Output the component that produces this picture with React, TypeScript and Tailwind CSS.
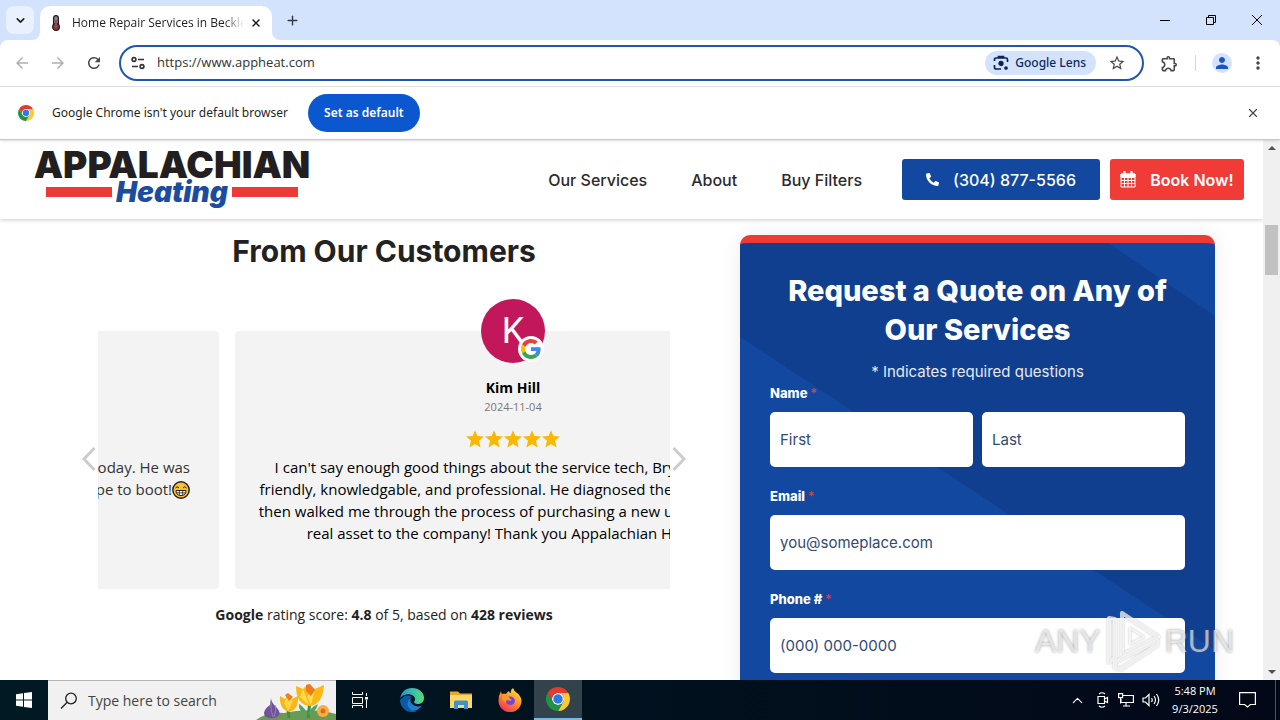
import { useState } from "react";
import type { ReactNode } from "react";
import { ChevronDown, ChevronUp, Plus, Search, X } from "lucide-react";
import { MdArrowBack, MdArrowForward, MdMoreVert, MdOutlineExtension, MdPerson, MdRefresh, MdStarBorder } from "react-icons/md";
import { FaPhoneAlt } from "react-icons/fa";

const uiFont = "font-['Open_Sans',sans-serif]";
const chromeFont = "font-['Noto_Sans',sans-serif]";
const siteFont = "font-['Inter',sans-serif]";

const reviewLines = [
  "I can't say enough good things about the service tech, Bryan. He was",
  "friendly, knowledgable, and professional. He diagnosed the problem and",
  "then walked me through the process of purchasing a new unit. Bryan is a",
  "real asset to the company! Thank you Appalachian Heating!",
];

function ChromeLogo({ className }: { className: string }) {
  return (
    <svg viewBox="0 0 48 48" className={className} aria-hidden="true">
      <circle cx="24" cy="24" r="12" fill="#fff" />
      <path d="M24 12H44.78a24 24 0 0 0-41.56 0L13.6 30A12 12 0 0 1 24 12Z" fill="#e33b2e" />
      <path d="M34.39 30 24 48A24 24 0 0 0 44.78 12H24A12 12 0 0 1 34.39 30Z" fill="#fcc934" />
      <path d="M13.61 30 3.22 12A24 24 0 0 0 24 48L34.39 30a12 12 0 0 1-20.78 0Z" fill="#1e9447" />
      <circle cx="24" cy="24" r="9.5" fill="#3077e8" />
    </svg>
  );
}

function GoogleLogo({ className }: { className: string }) {
  return (
    <svg viewBox="0 0 48 48" className={className} aria-hidden="true">
      <path fill="#EA4335" d="M24 9.5c3.54 0 6.71 1.22 9.21 3.6l6.85-6.85C35.9 2.38 30.47 0 24 0 14.62 0 6.51 5.38 2.56 13.22l7.98 6.19C12.43 13.72 17.74 9.5 24 9.5z" />
      <path fill="#4285F4" d="M46.98 24.55c0-1.57-.15-3.09-.38-4.55H24v9.02h12.94c-.58 2.96-2.26 5.48-4.78 7.18l7.73 6c4.51-4.18 7.09-10.36 7.09-17.65z" />
      <path fill="#FBBC05" d="M10.53 28.59c-.48-1.45-.76-2.99-.76-4.59s.27-3.14.76-4.59l-7.98-6.19C.92 16.46 0 20.12 0 24c0 3.88.92 7.54 2.56 10.78l7.97-6.19z" />
      <path fill="#34A853" d="M24 48c6.48 0 11.93-2.13 15.89-5.81l-7.73-6c-2.15 1.45-4.92 2.3-8.16 2.3-6.26 0-11.57-4.22-13.47-9.91l-7.98 6.19C6.51 42.62 14.62 48 24 48z" />
    </svg>
  );
}

function TabStrip() {
  return (
    <div className="flex h-10 bg-[#d3e3fd]">
      <button aria-label="Search tabs" className="ml-1.5 mt-1.5 flex h-7 w-7 items-center justify-center rounded-lg bg-[#e9f1fe]">
        <ChevronDown size={13} strokeWidth={3} color="#1f1f1f" />
      </button>
      <div className="relative ml-1.5 mt-1.5 flex w-[232px] items-center rounded-t-[10px] bg-white pl-2.5 pr-2">
        <svg viewBox="0 0 8 8" className="absolute -left-2 bottom-0 h-2 w-2"><path d="M8 0v8H0a8 8 0 0 0 8-8Z" fill="#fff" /></svg>
        <svg viewBox="0 0 8 8" className="absolute -right-2 bottom-0 h-2 w-2"><path d="M0 0v8h8a8 8 0 0 1-8-8Z" fill="#fff" /></svg>
        <svg viewBox="0 0 12 16" className="h-4 w-3 shrink-0">
          <rect x="3.6" y="0.6" width="4.8" height="11" rx="2.4" fill="#8d8488" stroke="#231f20" strokeWidth="1.3" />
          <circle cx="6" cy="12" r="3.4" fill="#8b3a3c" stroke="#231f20" strokeWidth="1.2" />
          <path d="M6 5v7" stroke="#a4484a" strokeWidth="2" />
        </svg>
        <span className="ml-2.5 flex-1 overflow-hidden whitespace-nowrap text-xs text-[#1f1f1f] [mask-image:linear-gradient(to_right,black_88%,transparent)]">
          Home Repair Services in Beckley
        </span>
        <button aria-label="Close tab" className="ml-1 flex h-4 w-4 items-center justify-center"><X size={12} strokeWidth={3} color="#1f1f1f" /></button>
      </div>
      <button aria-label="New tab" className="ml-3 flex w-4 items-center justify-center"><Plus size={15} strokeWidth={2.2} color="#333b47" /></button>
      <div className="ml-auto flex">
        <button aria-label="Minimize" className="flex w-[46px] items-center justify-center"><svg viewBox="0 0 10 10" className="h-2.5 w-2.5"><path d="M0 5.5h10" stroke="#000" /></svg></button>
        <button aria-label="Restore" className="flex w-[46px] items-center justify-center">
          <svg viewBox="0 0 10 10" className="h-2.5 w-2.5" fill="none" stroke="#000"><path d="M.5 2.5h7v7h-7zM2.5 2.5v-2h7v7h-2" /></svg>
        </button>
        <button aria-label="Close" className="flex w-[46px] items-center justify-center"><svg viewBox="0 0 10 10" className="h-2.5 w-2.5"><path d="m0 0 10 10M10 0 0 10" stroke="#000" /></svg></button>
      </div>
    </div>
  );
}

function Toolbar() {
  const [url, setUrl] = useState("https://www.appheat.com");
  return (
    <div className="bg-[#d3e3fd]">
      <div className="flex h-[47px] items-center rounded-t-lg border-b border-[#e2e2e2] bg-white pr-3 text-[#474747]">
        <button aria-label="Back" className="ml-[13px] w-5 text-[#b0b0b0]"><MdArrowBack size={18} /></button>
        <button aria-label="Forward" className="ml-4 w-5 text-[#b0b0b0]"><MdArrowForward size={18} /></button>
        <button aria-label="Reload" className="ml-4 w-5"><MdRefresh size={18} /></button>
        <div className="ml-3.5 flex h-9 flex-1 items-center rounded-full border-2 border-[#1f57b0] pl-2.5 pr-4">
          <svg viewBox="0 0 14 14" className="h-3.5 w-3.5" fill="none" stroke="#333" strokeWidth="1.6">
            <circle cx="3" cy="3.5" r="1.9" />
            <path d="M7 3.5h6M1 10.5h6" />
            <circle cx="11" cy="10.5" r="1.9" />
          </svg>
          <input
            aria-label="Address"
            value={url}
            onChange={(e) => setUrl(e.target.value)}
            className="ml-3 min-w-0 flex-1 text-[13px] text-[#333] outline-none"
          />
          <button className={`flex h-6 items-center gap-1.5 rounded-full bg-[#d3e3fd] pl-2 pr-2.5 text-xs font-medium text-[#0a2a5e] ${chromeFont}`}>
            <svg viewBox="0 0 16 16" className="h-4 w-4" fill="none" stroke="#0b2351" strokeWidth="1.7">
              <path d="M1.500 6V4.500A1.500 1.500 0 0 1 3 3h10a1.500 1.500 0 0 1 1.500 1.500V7M1.500 10v2.500A1.500 1.500 0 0 0 3 14h5M5.500 3V1.500h5V3" />
              <circle cx="8" cy="8.500" r="1.800" fill="#0b2351" />
              <circle cx="13" cy="13" r="1" fill="#0b2351" />
            </svg>
            Google Lens
          </button>
          <button aria-label="Bookmark this page" className="ml-3"><MdStarBorder size={18} /></button>
        </div>
        <button aria-label="Extensions" className="ml-4"><MdOutlineExtension size={19} /></button>
        <div className="ml-4 h-4 w-px bg-[#c9d8f2]" />
        <button aria-label="Profile" className="ml-4 flex h-5 w-5 items-center justify-center rounded-full bg-[#d3e3fd] text-[#1a56c4]"><MdPerson size={18} /></button>
        <button aria-label="Menu" className="ml-4"><MdMoreVert size={20} /></button>
      </div>
    </div>
  );
}

function InfoBar() {
  return (
    <div className={`relative z-20 flex h-[53px] items-center border-b border-[#c8c8c8] bg-white pl-[18px] pr-5 text-xs text-[#1f1f1f] shadow ${chromeFont}`}>
      <ChromeLogo className="h-4 w-4" />
      <span className="ml-[18px]">Google Chrome isn't your default browser</span>
      <button className="ml-5 h-[38px] w-28 rounded-full bg-[#0b57d0] font-semibold text-white">Set as default</button>
      <button aria-label="Dismiss" className="ml-auto"><X size={14} strokeWidth={2} color="#444" /></button>
    </div>
  );
}

function SiteHeader() {
  return (
    <header className={`relative z-10 flex h-[79px] items-center bg-white pl-8 pr-[19px] shadow-[0_1px_4px_rgba(0,0,0,0.2)] ${siteFont}`}>
      <a href="#home" className="flex w-[280px] flex-col items-center whitespace-nowrap pb-1">
        <span className="text-[37px] font-black leading-7 text-[#231f20]">APPALACHIAN</span>
        <span className="flex items-center gap-1">
          <span className="h-2.5 w-[66px] bg-[#ee3a36]" />
          <span className="text-[28px] font-black italic leading-[26px] text-[#1c4c9f]">Heating</span>
          <span className="h-2.5 w-[66px] bg-[#ee3a36]" />
        </span>
      </a>
      <nav className="ml-auto flex gap-11 text-base font-medium text-[#2b2b2b]">
        <a href="#services">Our Services</a>
        <a href="#about">About</a>
        <a href="#filters">Buy Filters</a>
      </nav>
      <a href="tel:3048775566" className="ml-10 flex h-[41px] w-[198px] items-center justify-center gap-3.5 rounded-[3px] bg-[#1248a0] font-medium text-white">
        <FaPhoneAlt size={13} />
        (304) 877-5566
      </a>
      <a href="#book" className="ml-2.5 flex h-[41px] w-[134px] items-center justify-center gap-3.5 rounded-[3px] bg-[#f03b37] font-semibold text-white">
        <svg viewBox="0 0 16 17" className="h-[17px] w-4" fill="none" stroke="currentColor">
          <path d="M1 3h14v13H1zM1 6.500h14M1 9.500h14M1 12.500h14M4.500 6v10M8 6v10M11.500 6v10" />
          <path d="M1 3h14v3H1z" fill="currentColor" />
          <path d="M4.500 1v3M11.500 1v3" strokeWidth="2.400" strokeLinecap="round" />
        </svg>
        Book Now!
      </a>
    </header>
  );
}

function Grin() {
  return (
    <svg viewBox="0 0 18 18" className="inline h-[18px] w-[18px] align-text-bottom" stroke="#231f20">
      <circle cx="9" cy="9" r="8.200" fill="#fbc02d" strokeWidth="1.400" />
      <path d="M3.500 7q1.500-2.500 3.500 0M11 7q1.500-2.500 3.500 0" fill="none" />
      <path d="M4 9.500h10q0 5-5 5t-5-5Z" fill="#fff" />
      <path d="M4.500 11.800h9M7.300 9.500v4.500M10.700 9.500v4.500" strokeWidth="0.800" />
    </svg>
  );
}

function Reviews() {
  return (
    <section className="min-w-0 text-center">
      <h2 className={`mt-3.5 text-[30px] font-bold leading-9 text-[#222] ${siteFont}`}>From Our Customers</h2>
      <div className="relative mx-[50px] mt-[30px]">
        <button aria-label="Previous review" className="absolute -left-4 top-[148px]">
          <svg viewBox="0 0 14 24" className="h-6 w-3.5" fill="none" stroke="#ccc" strokeWidth="3"><path d="M12.500 1 2 12l10.500 11" /></svg>
        </button>
        <div className="overflow-hidden">
          <div className="-ml-[435px] flex gap-4 pt-8 text-[15px] leading-[22px] text-black">
            <article className="h-[258px] w-[556px] shrink-0 rounded bg-[#f3f3f3] pr-[29px] pt-[125px] text-right text-[#333]">
              <p>Bryan came out to service our unit today. He was</p>
              <p>very knowledgeable and a super nice type to boot!<Grin /></p>
            </article>
            <article className="h-[258px] w-[556px] shrink-0 rounded bg-[#f3f3f3]">
              <div className="relative mx-auto -mt-8 flex h-16 w-16 items-center justify-center rounded-full bg-[#c2185b] font-['Roboto',sans-serif] text-4xl text-white">
                K
                <span className="absolute bottom-px right-px flex h-[26px] w-[26px] items-center justify-center rounded-full bg-white">
                  <GoogleLogo className="h-5 w-5" />
                </span>
              </div>
              <h3 className="mt-3.5 text-sm font-bold leading-[22px]">Kim Hill</h3>
              <time className="block text-[11px] leading-4 text-[#777]">2024-11-04</time>
              <div className="mb-2 mt-[15px] flex justify-center gap-px" role="img" aria-label="5 out of 5 stars">
                {[1, 2, 3, 4, 5].map((n) => (
                  <svg key={n} viewBox="0 0 18 18" className="h-[18px] w-[18px]">
                    <path d="m9 .2 2.400 5.800 6.600.5-5 4.300 1.600 6.700L9 14l-5.600 3.500L5 10.800 0 6.500 6.600 6Z" fill="#fbb800" />
                  </svg>
                ))}
              </div>
              {reviewLines.map((line) => (
                <p key={line} className="whitespace-nowrap">{line}</p>
              ))}
            </article>
          </div>
        </div>
        <button aria-label="Next review" className="absolute -right-4 top-[148px]">
          <svg viewBox="0 0 14 24" className="h-6 w-3.5" fill="none" stroke="#ccc" strokeWidth="3"><path d="M1.500 1 12 12 1.500 23" /></svg>
        </button>
      </div>
      <p className="mt-[15px] text-sm leading-[22px] text-[#222]">
        <b>Google</b> rating score: <b>4.8</b> of 5, based on <b>428 reviews</b>
      </p>
    </section>
  );
}

function Label({ id, children }: { id: string; children: ReactNode }) {
  return (
    <label htmlFor={id} className="block text-[13px] font-extrabold leading-5 text-white">
      {children} <span className="font-normal text-[#ee3a36]">*</span>
    </label>
  );
}

const fieldClass = "h-[55px] w-full min-w-0 rounded-[5px] bg-white px-2.5 text-[15px] text-[#333] outline-none placeholder:text-[#2f4a75]";

function QuoteForm() {
  return (
    <form className={`relative mt-4 h-[600px] min-w-0 overflow-hidden rounded-[10px] border-t-8 border-[#ee3a36] bg-[#1248a0] px-[30px] pt-7 text-white shadow-[0_0_20px_rgba(0,0,0,0.08)] ${siteFont}`}>
      <svg viewBox="0 0 475 437" preserveAspectRatio="none" className="absolute left-0 top-0 h-[437px] w-full">
        <path d="M0 0h368l107 73v334L0 94Z" fill="#113f90" />
      </svg>
      <div className="relative">
        <h2 className="text-center text-[29px] font-extrabold leading-[39px]">Request a Quote on Any of Our Services</h2>
        <p className="mt-3 text-center text-[15px] leading-[22px] text-[#e3e9f5]">* Indicates required questions</p>
        <Label id="first">Name</Label>
        <div className="mb-[19px] mt-[9px] flex gap-[9px]">
          <input id="first" placeholder="First" className={fieldClass} />
          <input aria-label="Last name" placeholder="Last" className={fieldClass} />
        </div>
        <Label id="email">Email</Label>
        <input id="email" type="email" placeholder="you@someplace.com" className={`${fieldClass} mb-[19px] mt-[9px]`} />
        <Label id="phone">Phone #</Label>
        <input id="phone" type="tel" placeholder="(000) 000-0000" className={`${fieldClass} mt-[9px]`} />
      </div>
    </form>
  );
}

function Scrollbar() {
  return (
    <div className="flex w-[17px] shrink-0 flex-col items-center bg-[#f0f0f0] py-1.5">
      <svg viewBox="0 0 8 4" className="h-1 w-2"><path d="m0 4 4-4 4 4Z" fill="#505050" /></svg>
      <div className="mt-[75px] h-[50px] w-[13px] bg-[#c1c1c1]" />
      <svg viewBox="0 0 8 4" className="mt-auto h-1 w-2"><path d="m0 0 4 4 4-4Z" fill="#505050" /></svg>
    </div>
  );
}

function Watermark() {
  return (
    <div className="pointer-events-none absolute bottom-2 right-[46px] z-20 flex items-center gap-1 font-['Liberation_Sans',sans-serif] text-[32px] leading-[60px] text-white/60 [text-shadow:0_0_3px_rgba(90,90,90,0.6)]">
      ANY
      <svg viewBox="0 0 56 62" className="h-[62px] w-14 drop-shadow-[0_0_1px_rgba(90,90,90,0.5)]" fill="none" stroke="#fff" strokeOpacity="0.7" strokeWidth="4" strokeLinejoin="round">
        <path d="M17 3v42l36-18L17 3Z" />
        <path d="M10 9 4 8v44l6-4Z" />
        <path d="m10 52 42-21v4L16 59l-6-1Z" />
        <path d="M25 18v16l14-7Z" strokeWidth="2" />
      </svg>
      RUN
    </div>
  );
}

function Crocuses() {
  return (
    <svg viewBox="0 0 80 39" className="h-[39px] w-20 shrink-0" aria-hidden="true">
      <path d="M0 39q12-9 28-7 26-6 52 1v6Z" fill="#6b9a55" />
      <path d="M33 37q-1-9-2-15M52 37q1-8 2-18" stroke="#3f8f46" strokeWidth="3" fill="none" />
      <path d="M52 34q1-7 10-11-2 8-10 11ZM51 34q-9-3-8-11 7 4 8 11Z" fill="#55a35a" />
      <path d="M15 17q0 4 5 9 8 8-2 11-10 1-10-5 1-5 6-8Z" fill="#70539b" />
      <path d="M15 21q-1 8 2 15M19 24q2 6-1 12" stroke="#9c7ac0" fill="none" />
      <path d="m24 15 5 3 3-4 4 4 6-3q1 14-9 16-10-3-9-16Z" fill="#f8b617" />
      <path d="m32 14-4 8 4 8 5-10Z" fill="#ffd546" />
      <path d="m29 14 3-2 5 4-4 4Z" fill="#ee7f1d" />
      <path d="m40 5 7 3 5-5 7 5 9-4q-1 19-14 21Q40 24 40 5Z" fill="#f9b912" />
      <path d="m47 8 6 16-9-8ZM59 8l-4 16-4-9Z" fill="#ffdd52" />
      <path d="m50 4 4-1 5 6-4 6-5-5Z" fill="#ee7b19" />
      <circle cx="67" cy="30" r="6" fill="#f6ad42" />
      <circle cx="67" cy="30" r="2.500" fill="#d96b27" />
    </svg>
  );
}

function Taskbar() {
  return (
    <footer className="flex h-10 shrink-0 bg-gradient-to-r from-[#001a24] to-[#020818] text-white">
      <button aria-label="Start" className="flex w-12 items-center justify-center">
        <svg viewBox="0 0 16 16" className="h-4 w-4" fill="#fff"><path d="m0 2.300 7-1v6.300H0ZM8 1.100 16 0v7.600H8ZM0 8.500h7v6.200l-7-1ZM8 8.500h8V16l-8-1.100Z" /></svg>
      </button>
      <div className="flex w-[288px] items-center border-t border-[#b5b5b5] bg-[#f1f1f1] pl-3">
        <svg viewBox="0 0 18 18" className="h-[18px] w-[18px] shrink-0" fill="none" stroke="#222" strokeWidth="1.300"><circle cx="11" cy="6.500" r="5.300" /><path d="M7.200 10.300 1 16.500" /></svg>
        <input aria-label="Search" placeholder="Type here to search" className="ml-2.5 min-w-0 flex-1 text-sm outline-none placeholder:text-[#444]" />
        <Crocuses />
      </div>
      <button aria-label="Task View" className="mr-[3px] flex w-12 items-center justify-center">
        <svg viewBox="0 0 18 16" className="h-4 w-[18px]" fill="none" stroke="#fff">
          <path d="M1.500 0v2.500h10V0M1.500 5.500h10v6h-10zM1.500 16v-2.500h10V16M15.500 1v3M15.500 8v8" />
          <path d="M14 5h3v2.500h-3z" fill="#fff" stroke="none" />
        </svg>
      </button>
      <button aria-label="Microsoft Edge" className="flex w-[49px] items-center justify-center">
        <svg viewBox="0 0 24 24" className="h-6 w-6">
          <defs>
            <linearGradient id="edgeTop"><stop stopColor="#2297dc" /><stop offset="1" stopColor="#55dd78" /></linearGradient>
          </defs>
          <path d="M0 12a12 12 0 0 0 17 11q-8 0-9-8 0-5 4-6-6-4-12 3Z" fill="#0c59a4" />
          <path d="M.2 10.500C1 4 6 0 12 0c7 0 12 4.500 12 10 0 3.500-2.500 6-6 6-3 0-4-1.300-4-2 0-.6 1-1 1-3 0-2.500-3-4.700-6.500-4.700C4 6.300 1 8.500.2 10.500Z" fill="url(#edgeTop)" />
          <path d="M9 11q-4 6 2 11 5 3 11-4.500-6 2.500-10-1.500-3-3-.5-6Z" fill="#1c7fd0" />
        </svg>
      </button>
      <button aria-label="File Explorer" className="flex w-[49px] items-center justify-center">
        <svg viewBox="0 0 22 20" className="h-5 w-[22px]">
          <path d="M0 1.500h8l2 2h12V18H0Z" fill="#e9a72b" />
          <path d="M0 5h22v13H0Z" fill="#ffd766" />
          <path d="M4 12q0-1.500 1.500-1.500h11q1.500 0 1.500 1.500v7h-4v-4H8v4H4Z" fill="#3e92cf" />
        </svg>
      </button>
      <button aria-label="Firefox" className="flex w-[49px] items-center justify-center">
        <svg viewBox="0 0 24 24" className="h-6 w-6">
          <defs>
            <linearGradient id="fox" x1="0.800" y1="0" x2="0.200" y2="1"><stop stopColor="#ffe33e" /><stop offset="0.500" stopColor="#ff8a22" /><stop offset="1" stopColor="#f0285f" /></linearGradient>
          </defs>
          <path d="M3 3q0 2 1 3 2-1 4 0 1-2 3-3 0 2 2 2-1-3 2-5 1 3 4 5 4 3 4.500 7.500A11.500 11.500 0 0 1 .5 13Q.5 7 3 3Z" fill="url(#fox)" />
          <path d="M9 9q6-2 8 3 0 5-5 5-5-1-4-5l4 1 2-1Z" fill="#7542e5" />
          <path d="M4 8q4-2 8 2l-2 2q-3 0-2 3-4-2-4-7Z" fill="#ff9a24" />
        </svg>
      </button>
      <button aria-label="Google Chrome" className="flex w-12 items-center justify-center border-b-2 border-[#76b9ed] bg-[#33434c]">
        <ChromeLogo className="h-6 w-6" />
      </button>
      <div className="ml-auto flex items-center">
        <ChevronUp size={17} strokeWidth={1.5} />
        <svg viewBox="0 0 14 16" className="ml-2.5 h-4 w-3.5" fill="none" stroke="#fff" strokeWidth="1.200">
          <path d="M2 4.500h6.500v7H2zM8.500 7l3-1.500v5l-3-1.500M3 2q3-2.500 6 0M3 14q3 2.500 6 0" />
        </svg>
        <svg viewBox="0 0 16 14" className="ml-2 h-3.5 w-4" fill="none" stroke="#fff" strokeWidth="1.200">
          <path d="M5 2.500h10.400v7H3V6M8 9.500V13M5 13h7M.6.600h4v4h-4zM2.600 4.500v6" />
        </svg>
        <svg viewBox="0 0 18 14" className="ml-2 h-3.5 w-[18px]" fill="none" stroke="#fff" strokeWidth="1.200">
          <path d="M1 5h2.500L7 1.500v11L3.500 9H1zM9.500 5q1.500 2 0 4M12 3q3 4 0 8M14.500 1q4.500 6 0 12" />
        </svg>
        <div className="ml-2.5 w-[50px] whitespace-nowrap text-center text-[11px] leading-[18px]">5:48 PM<br />9/3/2025</div>
        <button aria-label="Notifications" className="ml-[19px]">
          <svg viewBox="0 0 17 16" className="h-4 w-[17px]" fill="none" stroke="#fff" strokeWidth="1.200"><path d="M.6.600h15.800v11.900h-5L8.500 15l-2.900-2.500h-5z" /></svg>
        </button>
        <div className="ml-[19px] mr-1 h-10 w-px bg-[#4d525d]" />
      </div>
    </footer>
  );
}

export default function App() {
  return (
    <div className={`flex h-screen flex-col overflow-hidden bg-white ${uiFont}`}>
      <TabStrip />
      <Toolbar />
      <InfoBar />
      <div className="relative flex min-h-0 flex-1">
        <main className="min-w-0 flex-1 overflow-hidden">
          <SiteHeader />
          <div className="grid grid-cols-[672fr_475fr] gap-5 px-12">
            <Reviews />
            <QuoteForm />
          </div>
        </main>
        <Scrollbar />
        <Watermark />
      </div>
      <Taskbar />
    </div>
  );
}
